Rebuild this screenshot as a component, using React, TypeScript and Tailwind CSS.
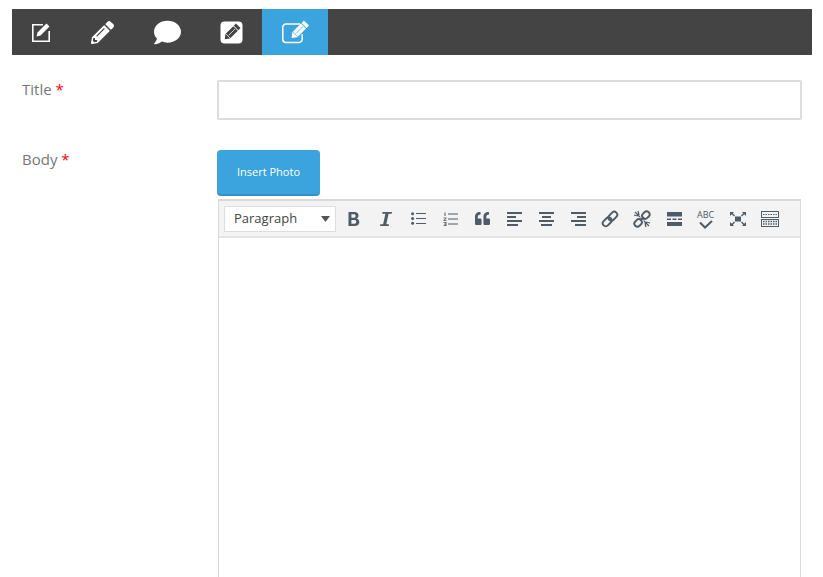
import { FaQuoteLeft, FaPencilAlt, FaComment } from "react-icons/fa";

const ink = "#4f5b66";

const tabs = [
  { width: "w-[58px]", active: false, icon: <NoteIcon /> },
  { width: "w-[64px]", active: false, icon: <FaPencilAlt className="size-[23px]" /> },
  { width: "w-[66px]", active: false, icon: <FaComment className="size-[27px]" /> },
  { width: "w-[62px]", active: false, icon: <PencilSquare /> },
  { width: "w-[66px]", active: true, icon: <EditIcon /> },
];

// pencil standing on its tip, rotated so the tip points down-left
function Pencil({ cx, cy, size, gap, color }: { cx: number; cy: number; size: number; gap: string; color: string }) {
  const w = size * 0.34;
  const h = size / 2;
  return (
    <g transform={`translate(${cx} ${cy}) rotate(45)`}>
      <rect x={-w / 2} y={-h} width={w} height={size * 0.16} fill={color} />
      <path d={`M${-w / 2} ${-h + size * 0.2}h${w}V${h - size * 0.22}L0 ${h}L${-w / 2} ${h - size * 0.22}z`} fill={color} />
      <path d={`M0 ${-h + size * 0.24}V${h - size * 0.3}`} stroke={gap} strokeWidth="0.7" />
      <path d={`M${-w / 2} ${h - size * 0.24}h${w}`} stroke={gap} strokeWidth="0.7" />
    </g>
  );
}

function NoteIcon() {
  return (
    <svg width="22" height="22" viewBox="0 0 22 22" fill="none">
      <path d="M13 3.800H2.800v16.400h16.400V10" stroke="white" strokeWidth="1.600" />
      <path d="M6.500 15.500l1-4L16.500 2.500l3 3L10.500 14.500z" fill="white" />
    </svg>
  );
}

function PencilSquare() {
  return (
    <svg width="23" height="23" viewBox="0 0 23 23">
      <rect x="0.500" y="0.500" width="22" height="22" rx="4" fill="white" />
      <Pencil cx={11.500} cy={11.500} size={19} gap="white" color="#444444" />
    </svg>
  );
}

function EditIcon() {
  return (
    <svg width="28" height="26" viewBox="0 0 28 26" fill="none">
      <path d="M19 5H5a3.200 3.200 0 0 0-3.200 3.200v12A3.200 3.200 0 0 0 5 23.400h13a3.200 3.200 0 0 0 3.200-3.200v-5" stroke="white" strokeWidth="1.500" />
      <Pencil cx={18} cy={11.500} size={21} gap="#3ba3dd" color="white" />
    </svg>
  );
}

function BoldIcon() {
  return (
    <svg width="12" height="14" viewBox="0 0 12 14" fill={ink}>
      <path fillRule="evenodd" d="M0.500 0h6c2.500 0 4 1.300 4 3.400 0 1.500-.8 2.500-2 3 1.700.4 2.800 1.600 2.800 3.500 0 2.500-1.800 4.100-4.600 4.100H.5zM3.400 2.300v3.500h2.600c1 0 1.600-.7 1.600-1.800S7 2.300 6 2.300zM3.400 8v3.700h3c1.100 0 1.900-.7 1.900-1.900S7.500 8 6.400 8z" />
    </svg>
  );
}

function ItalicIcon() {
  return (
    <svg width="12" height="14" viewBox="0 0 12 14" fill={ink}>
      <path d="M2.500 0H12l-.3 1.800H8.600L6.300 12.200H9L8.700 14H0l.3-1.800h2.800L5.400 1.800H2.200z" />
    </svg>
  );
}

function AlignIcon({ align }: { align: "left" | "center" | "right" }) {
  const x = (w: number) => (align === "left" ? 0 : align === "center" ? (15 - w) / 2 : 15 - w);
  return (
    <svg width="15" height="14" viewBox="0 0 15 14" fill={ink}>
      <rect x={x(15)} y="0" width="15" height="2" />
      <rect x={x(9)} y="4" width="9" height="2" />
      <rect x={x(15)} y="8" width="15" height="2" />
      <rect x={x(11)} y="12" width="11" height="2" />
    </svg>
  );
}

function BulletList() {
  return (
    <svg width="15" height="13" viewBox="0 0 15 13" fill={ink}>
      <circle cx="1.600" cy="1.700" r="1.500" />
      <circle cx="1.600" cy="6.500" r="1.500" />
      <circle cx="1.600" cy="11.300" r="1.500" />
      <rect x="5" y="1" width="10" height="1" />
      <rect x="5" y="6" width="10" height="1" />
      <rect x="5" y="11" width="10" height="1" />
    </svg>
  );
}

function NumberList() {
  return (
    <svg width="15" height="14" viewBox="0 0 15 14" fill={ink}>
      <path d="M1.500 0.500h1v3.500h-1zM0.500 5.500h3v.8l-2 2h2v.7h-3v-.8l2-2h-2zM0.500 10h3v4h-3v-.7h2v-.9h-1.500v-.7h1.500v-.9h-2z" />
      <rect x="5" y="1.500" width="10" height="1" />
      <rect x="5" y="6.500" width="10" height="1" />
      <rect x="5" y="11.500" width="10" height="1" />
    </svg>
  );
}

function LinkIcon() {
  return (
    <svg width="18" height="18" viewBox="0 0 18 18" fill="none" stroke={ink} strokeWidth="1.900">
      <g transform="rotate(-45 9 9)">
        <rect x="0" y="6" width="10" height="6" rx="3" />
        <rect x="8" y="6" width="10" height="6" rx="3" />
      </g>
    </svg>
  );
}

function UnlinkIcon() {
  return (
    <svg width="18" height="18" viewBox="0 0 18 18" fill="none" stroke={ink}>
      <g transform="rotate(-45 9 9)" strokeWidth="1.900">
        <rect x="-0.500" y="6" width="8" height="6" rx="3" />
        <rect x="10.500" y="6" width="8" height="6" rx="3" />
      </g>
      <path d="M2 2l5 5M5 1l1 4M1 5l4 1M16 16l-5-5M13 17l-1-4M17 13l-4-1M8 10l3-3M7 8l2 .5M9.500 9.500l2 .5" strokeWidth="1.200" />
    </svg>
  );
}

function PageBreakIcon() {
  return (
    <svg width="15" height="14" viewBox="0 0 15 14" fill={ink}>
      <rect x="0" y="0" width="15" height="4.500" />
      <rect x="0" y="6.500" width="4" height="1.500" />
      <rect x="5.500" y="6.500" width="4" height="1.500" />
      <rect x="11" y="6.500" width="4" height="1.500" />
      <rect x="0" y="10" width="15" height="4" />
    </svg>
  );
}

function SpellIcon() {
  return (
    <div className="relative h-[18px] w-[16px]">
      <span className="absolute -left-px top-0 text-[9px] leading-[10px] text-[#4f5b66]">ABC</span>
      <svg className="absolute left-[1px] top-[10px]" width="14" height="9" viewBox="0 0 14 9" fill="none" stroke={ink} strokeWidth="2">
        <path d="M1 2.500l5 5 7-6.500" />
      </svg>
    </div>
  );
}

function FullscreenIcon() {
  return (
    <svg width="16" height="14" viewBox="0 0 16 14" fill={ink}>
      <rect x="5" y="4.500" width="6" height="5" />
      <path d="M0 0h4l-1.200 1.200L5 3.500l-1 1-2.200-2.300L0 4zM16 0h-4l1.200 1.200L11 3.500l1 1 2.200-2.300L16 4zM0 14h4l-1.200-1.200L5 10.500l-1-1-2.200 2.300L0 10zM16 14h-4l1.200-1.200L11 10.500l1-1 2.200 2.300L16 10z" />
    </svg>
  );
}

function KeyboardIcon() {
  return (
    <svg width="18" height="16" viewBox="0 0 18 16" fill="none" stroke={ink}>
      <rect x="0.500" y="0.500" width="17" height="6" />
      <rect x="0.500" y="8.500" width="17" height="7" />
      <path d="M2 3.500h14" strokeDasharray="1.500 1" />
      <path d="M2 10.500h14M2 13h14" strokeWidth="1.300" strokeDasharray="1.500 1" />
    </svg>
  );
}

const toolbar = [
  <BoldIcon />,
  <ItalicIcon />,
  <BulletList />,
  <NumberList />,
  <FaQuoteLeft className="size-[15px] text-[#4f5b66]" />,
  <AlignIcon align="left" />,
  <AlignIcon align="center" />,
  <AlignIcon align="right" />,
  <LinkIcon />,
  <UnlinkIcon />,
  <PageBreakIcon />,
  <SpellIcon />,
  <FullscreenIcon />,
  <KeyboardIcon />,
];

export default function App() {
  return (
    <div className="h-[577px] overflow-hidden bg-white pt-[9px] pl-3 pr-[11px] font-['Open_Sans',sans-serif]">
      <div className="flex h-[46px] bg-[#444444] text-white">
        {tabs.map((tab, i) => (
          <div key={i} className={`flex items-center justify-center ${tab.width} ${tab.active ? "bg-[#3ba3dd]" : ""}`}>
            {tab.icon}
          </div>
        ))}
      </div>

      <div className="mt-[25px] flex">
        <label className="w-[205px] pl-[10px] text-[15px] leading-[18px] text-[#777777]">
          Title <span className="text-[#ff0000]">*</span>
        </label>
        <input className="h-10 w-[585px] rounded-[2px] border-2 border-[#dddddd] bg-white" />
      </div>

      <div className="mt-[30px] flex">
        <label className="w-[205px] pl-[10px] text-[15px] leading-[18px] text-[#777777]">
          Body <span className="text-[#ff0000]">*</span>
        </label>
        <div className="w-[585px]">
          <button className="h-[46px] w-[103px] rounded-[4px] border-b-2 border-[#3590c4] bg-[#3ba3dd] text-[11px] text-white">
            Insert Photo
          </button>
          <div className="mt-[3px] ml-px h-[400px] w-[583px] border-x border-t-2 border-[#d9d9d9]">
            <div className="flex h-[37px] items-center border-b-2 border-[#e4e4e4] bg-[#f3f3f3] pl-[5px]">
              <div className="flex h-[26px] w-[112px] items-center justify-between border border-[#dddddd] bg-white pr-[5px] pl-[9px] text-[13px] text-[#444444]">
                <span className="pt-px">Paragraph</span>
                <svg width="9" height="6" viewBox="0 0 9 6" fill="#555555">
                  <path d="M0 0h9L4.500 6z" />
                </svg>
              </div>
              <div className="ml-[2px] flex items-center">
                {toolbar.map((icon, i) => (
                  <div key={i} className="flex w-8 items-center justify-center">
                    {icon}
                  </div>
                ))}
              </div>
            </div>
          </div>
        </div>
      </div>
    </div>
  );
}
